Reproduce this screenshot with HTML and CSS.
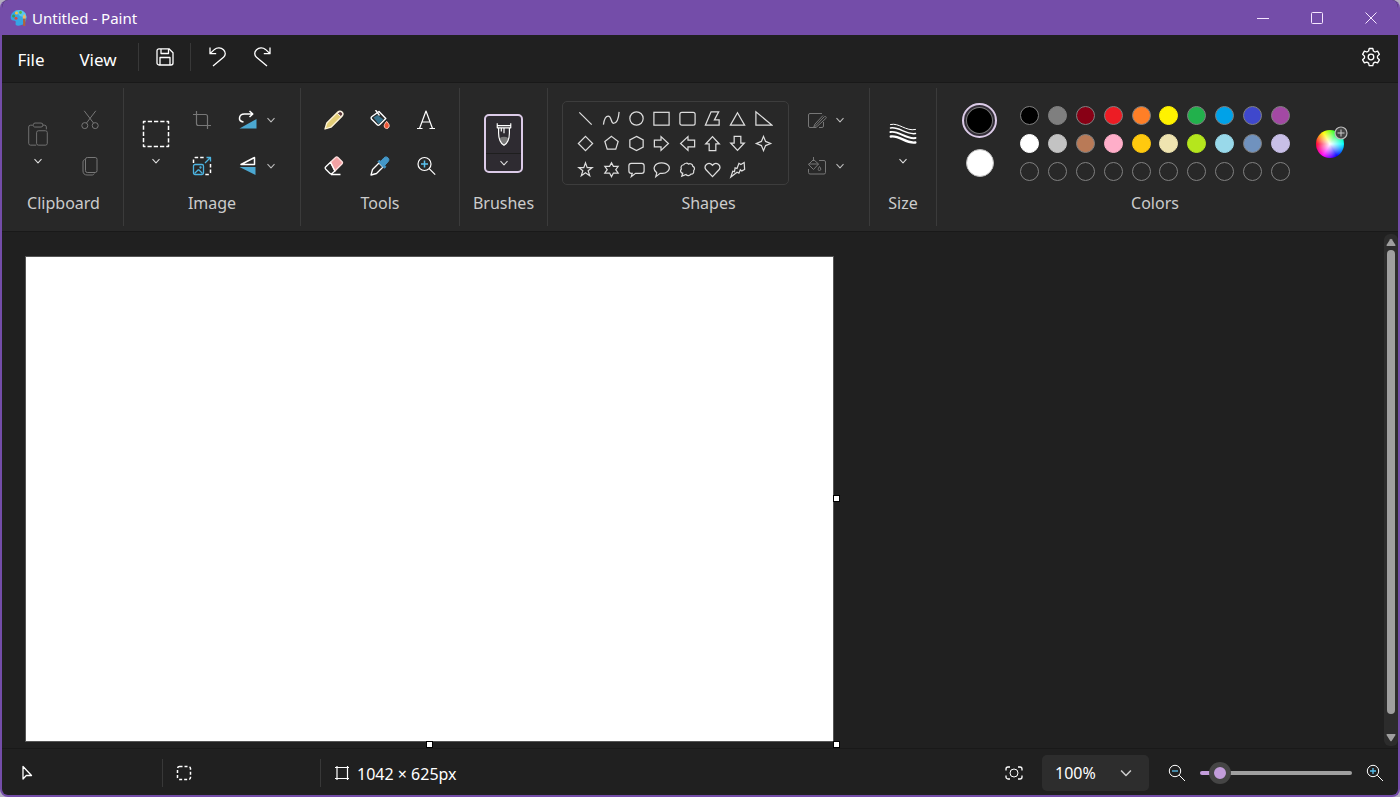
FILE: index.html
```html
<!DOCTYPE html>
<html lang="en">
<head>
<meta charset="utf-8">
<meta name="viewport" content="width=device-width, initial-scale=1">
<title>Untitled - Paint</title>
<link rel="stylesheet" href="styles.css">
</head>
<body>
<svg class="defs" aria-hidden="true">
  <symbol id="chevron" viewBox="0 0 10 10"><path d="M1.500 3.200 5 6.800 8.500 3.200" fill="none" stroke="currentColor" stroke-width="1.100"/></symbol>
</svg>
<div class="window">
  <header class="titlebar">
    <svg class="app-icon" viewBox="0 0 18 18"><path d="M9 1C4 1 .7 4.300.7 8.500c0 2.500 1.500 3 3 2.900 1.800 0 2.400 1 1.900 2.600-.4 1.700.5 2.800 2.500 2.800 5 0 8.400-3.600 8.400-8C16.500 4.200 13.300 1 9 1z" fill="#35a5e5"/><path d="M9 1c4.300 0 7.500 3.200 7.500 7.800L10 7 5 2z" fill="#58c7ee"/><circle cx="3.600" cy="7" r="1.500" fill="#3f9e50"/><circle cx="6.500" cy="4" r="1.600" fill="#f0c34b"/><circle cx="10.500" cy="3.500" r="1.400" fill="#58b947"/><circle cx="6" cy="9.300" r="1.500" fill="#d94a45"/><path d="M13 9.500h2.500l-.3 7.500h-2z" fill="#b0643b"/><path d="M12.600 9.500c0-2 .7-3 1.700-4.500 1 1.500 1.600 2.500 1.600 4.500z" fill="#edb766"/></svg>
    <h1 class="title">Untitled - Paint</h1>
    <div class="window-controls">
      <button class="caption" aria-label="Minimize"><svg viewBox="0 0 14 14"><path d="M1 7.500h12"/></svg></button>
      <button class="caption" aria-label="Maximize"><svg viewBox="0 0 14 14"><rect x="1.500" y="1.500" width="11" height="11" rx="1"/></svg></button>
      <button class="caption" aria-label="Close"><svg viewBox="0 0 14 14"><path d="m1.500 1.500 11 11m0-11-11 11"/></svg></button>
    </div>
  </header>

  <nav class="menubar">
    <button class="menu">File</button>
    <button class="menu">View</button>
    <span class="rule"></span>
    <button class="quick" aria-label="Save"><svg viewBox="0 0 20 20"><path d="M4 1.800h10l4 4V16a2 2 0 0 1-2 2H4a2 2 0 0 1-2-2V3.800a2 2 0 0 1 2-2zM6 2v4.500h7.500V2M5 18v-7.500h10V18"/></svg></button>
    <span class="rule"></span>
    <button class="quick" aria-label="Undo"><svg viewBox="0 0 20 20"><path d="M3 .5v6.200h6.200M3.300 6.400l4.200-4C10 .2 14 .3 16.500 2.700s2.200 5.500 0 7.600L6 19"/></svg></button>
    <button class="quick" aria-label="Redo"><svg viewBox="0 0 20 20"><path d="M17 .5v6.200h-6.200m5.900-.3-4.200-4C10 .2 6 .3 3.500 2.700s-2.200 5.500 0 7.600L14 19"/></svg></button>
    <button class="quick settings" aria-label="Settings"><svg viewBox="0 0 20 20"><circle cx="10" cy="10" r="2.800"/><path d="m8.200 1.500 3.600 0 .6 2.500 1.700 1 2.500-.8 1.800 3.100-1.900 1.800v1.900l1.900 1.800-1.800 3.100-2.500-.8-1.700 1-.6 2.500H8.200l-.6-2.500-1.700-1-2.500.8-1.800-3.100 1.900-1.800V9.100L1.600 7.300l1.800-3.100 2.500.8 1.700-1z"/></svg></button>
  </nav>

  <main class="ribbon">
    <section class="group clipboard" aria-label="Clipboard">
      <div class="body">
        <div class="tall">
          <button class="big dim" aria-label="Paste"><svg viewBox="0 0 28 28"><path d="M8.500 4.500H6a2 2 0 0 0-2 2V24a2 2 0 0 0 2 2h6M19.500 4.500H21a2 2 0 0 1 2 2V9M9 4a1.800 1.800 0 0 1 1.800-1.800h6.400a1.800 1.800 0 0 1 0 4.300h-6.400A1.800 1.800 0 0 1 9 4z"/><rect x="12.500" y="10.500" width="11.500" height="15.500" rx="2"/></svg></button>
          <button class="drop" aria-label="Paste options"><svg><use href="#chevron"/></svg></button>
        </div>
        <div class="cells one">
          <button class="tool dim" aria-label="Cut"><svg viewBox="0 0 20 20"><circle cx="4.800" cy="15.600" r="3"/><circle cx="15.200" cy="15.600" r="3"/><path d="M4.200.8 13.500 13M15.800.8 6.500 13"/></svg></button>
          <button class="tool dim" aria-label="Copy"><svg viewBox="0 0 20 20"><rect x="5.500" y="1.500" width="11.500" height="15" rx="1.800"/><path d="M5.500 3.500C4 3.500 3 4.300 3 6v9c0 2.500 1.500 4 4 4h5c1 0 2-.5 2.300-1.500"/></svg></button>
        </div>
      </div>
      <h2 class="label">Clipboard</h2>
    </section>

    <section class="group image" aria-label="Image">
      <div class="body">
        <div class="tall">
          <button class="big" aria-label="Select"><svg viewBox="0 0 28 28"><rect x="1.500" y="1.500" width="25" height="25" stroke-width="1.500" stroke-dasharray="4.250 2" stroke-dashoffset="2"/></svg></button>
          <button class="drop" aria-label="Select options"><svg><use href="#chevron"/></svg></button>
        </div>
        <div class="cells one">
          <button class="tool dim" aria-label="Crop"><svg viewBox="0 0 20 20"><path d="M1 4.500h12.500a2 2 0 0 1 2 2V19M4.500 1v12.500a2 2 0 0 0 2 2H19" stroke-width="1.200"/></svg></button>
          <button class="tool" aria-label="Resize"><svg viewBox="0 0 20 20"><path d="M1.500 7V3.500a2 2 0 0 1 2-2H13M18.500 8v8.500a2 2 0 0 1-2 2H13" stroke-width="1.500" stroke-dasharray="3.500 2"/><g stroke="#4cb3e0" stroke-width="1.300"><rect x="1.500" y="8.500" width="10" height="10" rx="1.500"/><path d="m2.500 17.500 3.500-3.500h1l3.500 3.500M13 7l5-5m-3.500-.5h4v4"/><circle cx="8.500" cy="11.500" r=".5"/></g></svg></button>
        </div>
        <div class="cells one">
          <div class="split"><button class="tool" aria-label="Rotate"><svg viewBox="0 0 20 20"><path d="M18.500 9v9.500h-17z" fill="#4ba8d2" stroke="none"/><path d="M5.500 12C2.500 11.500 1.300 9.800 1.500 8c.2-2.500 2-4 5-4h8M11.500 1 14.800 4 11.500 7" stroke-width="1.500"/></svg></button><button class="drop" aria-label="Rotate options"><svg><use href="#chevron"/></svg></button></div>
          <div class="split"><button class="tool" aria-label="Flip"><svg viewBox="0 0 20 20"><path d="M16.500 1.500v7H3z" stroke-width="1.500"/><path d="M1.500 11h16v8z" fill="#4ba8d2" stroke="none"/></svg></button><button class="drop" aria-label="Flip options"><svg><use href="#chevron"/></svg></button></div>
        </div>
      </div>
      <h2 class="label">Image</h2>
    </section>

    <section class="group tools" aria-label="Tools">
      <div class="body">
        <div class="cells three">
          <button class="tool" aria-label="Pencil"><svg viewBox="0 0 20 20"><path d="m1 19 1.800-6L13.800 2c1.300-1.300 2.900-1.300 4.200 0s1.300 2.900 0 4.200L7 17.200z" fill="#e3cd77" stroke="#fff4d8" stroke-width="1.300"/><path d="m13.500 3.300 3.300 3.300 1.200-1.300c.8-1 .7-2-.1-2.900s-2-1-3-.3z" fill="#5b3838" stroke="#fff"/></svg></button>
          <button class="tool" aria-label="Fill"><svg viewBox="0 0 20 20"><path d="m2 6.500 7-5 6.800 7-6.300 6.300c-.8.800-1.500.8-2.300 0l-5.500-5.500c-.9-.9-.7-2 .3-2.800z" stroke-width="1.400"/><path d="m3.500 7.500 4-2.500 6 4.500-5 4.500z" fill="#36718b" stroke="none"/><path d="m5.500 0 4 5.500" stroke-width="1.300"/><path d="M16.700 11.300c2.400 3 3 4 2.200 5.800a2.400 2.400 0 0 1-4.400 0c-.8-1.800 0-3 2.200-5.800z" fill="#ed5536" stroke="#ffc8b7"/></svg></button>
          <button class="tool" aria-label="Text"><svg viewBox="0 0 20 20"><path d="M3.500 18.500 10 1l6.500 17.500M6 12h8M1 18.500h5.500M13.500 18.500H19" stroke-width="1.200"/></svg></button>
          <button class="tool" aria-label="Eraser"><svg viewBox="0 0 20 20"><g stroke-width="1.300"><path d="m6.500 6.200 5-4.700c.8-.8 1.600-.8 2.400 0l4 4c.8.800.8 1.700 0 2.500l-7 7z" fill="#f3a2a4" stroke="#ffe0df"/><path d="m6.500 6.200-4.700 4.600c-.8.800-.8 1.700 0 2.500l4 4c.8.800 1.700.8 2.500 0l2.600-2.300zM7 18.500h9.500"/></g></svg></button>
          <button class="tool" aria-label="Color picker"><svg viewBox="0 0 20 20"><path d="m9 7 4 4-6.500 6.500-5.500 1.500 1.500-5.500z" stroke-width="1.300"/><path d="m8 5.500 1.200-1.200 1.600 1L14 1.800c1.200-1.200 2.800-1.200 4 0s1.200 2.800 0 4l-3.200 3.500 1 1.500-1.300 1.500z" fill="#4498c9" stroke="#4498c9"/></svg></button>
          <button class="tool" aria-label="Magnifier"><svg viewBox="0 0 20 20"><circle cx="8.500" cy="8" r="6.500" stroke-width="1.200"/><path d="m13.200 12.700 6 6" stroke-width="1.200"/><path d="M8.500 4.500v7M5 8h7" stroke="#5ac1ee" stroke-width="1.500"/></svg></button>
        </div>
      </div>
      <h2 class="label">Tools</h2>
    </section>

    <section class="group brushes" aria-label="Brushes">
      <div class="body">
        <div class="brush-box">
          <button class="brush" aria-label="Brush"><svg viewBox="0 0 20 28"><path d="M5 17.500c3-2 7-2 10 0-1 3.500-2.500 6.500-5 8-2.500-1.500-4-4.500-5-8z" fill="#777" stroke="none"/><path d="M2.500 1v5h15V1M2.500 3.500h15M4 6v6c0 6 2 11 6 13.500 4-2.500 6-7.500 6-13.500V6M7 6v4M10 6v6" stroke-width="1.300"/></svg></button>
          <button class="drop" aria-label="Brush options"><svg><use href="#chevron"/></svg></button>
        </div>
      </div>
      <h2 class="label">Brushes</h2>
    </section>

    <section class="group shapes" aria-label="Shapes">
      <div class="body">
        <div class="gallery">
          <button aria-label="Line"><svg viewBox="0 0 20 20"><path d="m3.500 3.500 13 13"/></svg></button>
          <button aria-label="Curve"><svg viewBox="0 0 20 20"><path d="M1.500 16.500C2.500 9 4 7.500 6.500 7.500c4 0 2.500 8 6 7.500 3-.5 5-5 5.500-12"/></svg></button>
          <button aria-label="Oval"><svg viewBox="0 0 20 20"><circle cx="10" cy="10" r="7"/></svg></button>
          <button aria-label="Rectangle"><svg viewBox="0 0 20 20"><rect x="2" y="3.500" width="16" height="13.500"/></svg></button>
          <button aria-label="Rounded rectangle"><svg viewBox="0 0 20 20"><rect x="2" y="3.500" width="16" height="13.500" rx="2"/></svg></button>
          <button aria-label="Polygon"><svg viewBox="0 0 20 20"><path d="M8.500 3h8l-4.500 8.500h5V17H2.500z"/></svg></button>
          <button aria-label="Triangle"><svg viewBox="0 0 20 20"><path d="m10 4 7.500 13h-15z"/></svg></button>
          <button aria-label="Right triangle"><svg viewBox="0 0 20 20"><path d="M2 3v14h17z"/></svg></button>
          <button aria-label="Diamond"><svg viewBox="0 0 20 20"><path d="m10 2.500 7.500 7.500-7.500 7.500L2.500 10z"/></svg></button>
          <button aria-label="Pentagon"><svg viewBox="0 0 20 20"><path d="m10 2.500 7 5.300-2.500 8.200h-9L3 7.800z"/></svg></button>
          <button aria-label="Hexagon"><svg viewBox="0 0 20 20"><path d="m10 2.500 7 3.700v7.600l-7 3.700-7-3.700V6.200z"/></svg></button>
          <button aria-label="Right arrow"><svg viewBox="0 0 20 20"><path d="M2.500 6.500h7V2.800L17.300 10l-7.800 7.200v-3.700h-7z"/></svg></button>
          <button aria-label="Left arrow"><svg viewBox="0 0 20 20"><path d="M17.500 6.500h-7V2.800L2.700 10l7.800 7.200v-3.700h7z"/></svg></button>
          <button aria-label="Up arrow"><svg viewBox="0 0 20 20"><path d="M6.500 17.500v-7H2.800L10 2.700l7.200 7.800h-3.700v7z"/></svg></button>
          <button aria-label="Down arrow"><svg viewBox="0 0 20 20"><path d="M6.500 2.500v7H2.800L10 17.300l7.200-7.800h-3.700v-7z"/></svg></button>
          <button aria-label="Four-point star"><svg viewBox="0 0 20 20"><path d="m10 2.500 2.200 5.300 5.300 2.200-5.300 2.200L10 17.500l-2.200-5.300L2.500 10l5.300-2.200z"/></svg></button>
          <button aria-label="Five-point star"><svg viewBox="0 0 20 20"><path d="m10 3 1.800 5h5.200l-4.200 3.300 1.600 5.200-4.400-3-4.400 3 1.600-5.200L3 8h5.200z"/></svg></button>
          <button aria-label="Six-point star"><svg viewBox="0 0 20 20"><path d="m10 3 2 3.700h5l-2.500 3.500L17 13.700h-5l-2 3.800-2-3.800H3l2.500-3.500L3 6.700h5z"/></svg></button>
          <button aria-label="Rounded callout"><svg viewBox="0 0 20 20"><path d="M4.500 3.500h11A2.500 2.500 0 0 1 18 6v5.500a2.500 2.500 0 0 1-2.500 2.500H9l-4.500 3.500L5.500 14h-1A2.500 2.500 0 0 1 2 11.500V6a2.500 2.500 0 0 1 2.500-2.500z"/></svg></button>
          <button aria-label="Oval callout"><svg viewBox="0 0 20 20"><path d="M5 13.500C-.5 9 3 3 10 3s10.500 5 6.500 9c-2 2-5 2.500-8 2L4 17.500z"/></svg></button>
          <button aria-label="Cloud callout"><svg viewBox="0 0 20 20"><path d="M5 14C2.500 13.500 2 11 3.500 9.500 2.500 7 4 5 6 5c1-2 4-2 5-.7 2-1 4.500.2 4.500 2.200 2 1 2.500 3 1 4.700.5 2.500-1 3.800-2.800 3.600-1 2-4 2-5.200.5L4 17z"/></svg></button>
          <button aria-label="Heart"><svg viewBox="0 0 20 20"><path d="M10 17.500 3.200 10.300C0 6 6 .8 10 5.500c4-4.700 10 .5 6.800 4.800z"/></svg></button>
          <button aria-label="Lightning"><svg viewBox="0 0 20 20"><path d="m11.500 3.500 2 1.200 3.500-2 .5 7.300-3 1.500-1.500-1.200-1.500 3.500-2-1-6.500 5 2-6 1.800.5.700-4 2 .7z"/></svg></button>
        </div>
        <div class="cells one">
          <div class="split"><button class="tool dim" aria-label="Shape outline"><svg viewBox="0 0 20 20"><path d="M15 3.500H3a1.500 1.500 0 0 0-1.500 1.500v11A1.500 1.500 0 0 0 3 17.500h4L17 7c1.500-1.500 3 .3 1.800 1.500L9 17.500H6.500L8 14l8-8.500M16.500 12v4a1.500 1.500 0 0 1-1.500 1.500h-3"/></svg></button><button class="drop" aria-label="Outline options"><svg><use href="#chevron"/></svg></button></div>
          <div class="split"><button class="tool dim" aria-label="Shape fill"><svg viewBox="0 0 20 20"><path d="m6.500 3.500 5 4.500-5 5.500-5-5zM1.500 8h10M6.500 1v4M12 4.500h5A1.500 1.500 0 0 1 18.500 6v10.500A1.500 1.500 0 0 1 17 18H3a1.500 1.500 0 0 1-1.500-1.500V13M12.500 10.500c1.500 2 2 3.800 0 4s-1.500-2 0-4z"/></svg></button><button class="drop" aria-label="Fill options"><svg><use href="#chevron"/></svg></button></div>
        </div>
      </div>
      <h2 class="label">Shapes</h2>
    </section>

    <section class="group size" aria-label="Size">
      <div class="body">
        <div class="tall">
          <button class="big" aria-label="Size"><svg viewBox="0 0 28 28"><g stroke-linecap="round"><path d="M1.500 4.500c9-2 15 7 25 5" stroke-width="1"/><path d="M1.500 8c9-1.500 15 7 25 5.500" stroke-width="1.500"/><path d="M1.500 12c9-1.500 15 7.500 25 6" stroke-width="2"/><path d="M1.800 16.500c9-1.500 15 7.500 24.500 6" stroke-width="2.500"/></g></svg></button>
          <button class="drop" aria-label="Size options"><svg><use href="#chevron"/></svg></button>
        </div>
      </div>
      <h2 class="label">Size</h2>
    </section>

    <section class="group colors" aria-label="Colors">
      <div class="body">
        <div class="current">
          <button class="primary" aria-label="Color 1, black"></button>
          <button class="secondary" aria-label="Color 2, white"></button>
        </div>
        <div class="palette">
          <button class="swatch black" aria-label="Black"></button>
          <button class="swatch gray" aria-label="Gray"></button>
          <button class="swatch dark-red" aria-label="Dark red"></button>
          <button class="swatch red" aria-label="Red"></button>
          <button class="swatch orange" aria-label="Orange"></button>
          <button class="swatch yellow" aria-label="Yellow"></button>
          <button class="swatch green" aria-label="Green"></button>
          <button class="swatch turquoise" aria-label="Turquoise"></button>
          <button class="swatch indigo" aria-label="Indigo"></button>
          <button class="swatch purple" aria-label="Purple"></button>
          <button class="swatch white" aria-label="White"></button>
          <button class="swatch light-gray" aria-label="Light gray"></button>
          <button class="swatch brown" aria-label="Brown"></button>
          <button class="swatch rose" aria-label="Rose"></button>
          <button class="swatch gold" aria-label="Gold"></button>
          <button class="swatch light-yellow" aria-label="Light yellow"></button>
          <button class="swatch lime" aria-label="Lime"></button>
          <button class="swatch light-turquoise" aria-label="Light turquoise"></button>
          <button class="swatch blue-gray" aria-label="Blue gray"></button>
          <button class="swatch lavender" aria-label="Lavender"></button>
          <button class="swatch" aria-label="Custom color 1"></button>
          <button class="swatch" aria-label="Custom color 2"></button>
          <button class="swatch" aria-label="Custom color 3"></button>
          <button class="swatch" aria-label="Custom color 4"></button>
          <button class="swatch" aria-label="Custom color 5"></button>
          <button class="swatch" aria-label="Custom color 6"></button>
          <button class="swatch" aria-label="Custom color 7"></button>
          <button class="swatch" aria-label="Custom color 8"></button>
          <button class="swatch" aria-label="Custom color 9"></button>
          <button class="swatch" aria-label="Custom color 10"></button>
        </div>
        <button class="wheel" aria-label="Edit colors"><svg class="wheel-badge" viewBox="0 0 14 14"><circle cx="7" cy="7" r="6" fill="#444" stroke="#bbb" stroke-width="1.200"/><path d="M7 3.500v7M3.500 7h7" stroke="#ccc"/></svg></button>
      </div>
      <h2 class="label">Colors</h2>
    </section>
  </main>

  <div class="workspace">
    <div class="viewport">
      <div class="canvas">
        <span class="handle east"></span>
        <span class="handle south"></span>
        <span class="handle corner"></span>
      </div>
    </div>
    <div class="scrollbar">
      <button aria-label="Scroll up"><svg viewBox="0 0 10 8"><path d="M4.200 1.200a1 1 0 0 1 1.600 0L9.500 7q.2 1-.7 1H1.200Q.3 8 .5 7z"/></svg></button>
      <span class="thumb"></span>
      <button aria-label="Scroll down"><svg viewBox="0 0 10 8"><path d="M4.200 6.800a1 1 0 0 0 1.600 0L9.500 1q.2-1-.7-1H1.200Q.3 0 .5 1z"/></svg></button>
    </div>
  </div>

  <footer class="statusbar">
    <div class="cell"><svg viewBox="0 0 18 18"><path d="M5 2.500v12.500l3.300-3.500h5.200z" stroke-width="1.300"/></svg></div>
    <div class="cell"><svg viewBox="0 0 18 18"><rect x="2.500" y="2.500" width="13" height="13" rx="2" stroke-width="1.500" stroke-dasharray="3 2"/></svg></div>
    <div class="cell"><svg viewBox="0 0 18 18"><path d="M2 3.500h14M2 14.500h14M4 2v14M14.500 2v14" stroke-width="1.200"/></svg><span>1042 × 625px</span></div>
    <div class="zoom">
      <button class="fit" aria-label="Fit to window"><svg viewBox="0 0 18 18"><circle cx="9" cy="9" r="4"/><path d="M1 6.500V5a2 2 0 0 1 2-2h2M13 3h2a2 2 0 0 1 2 2v1.500M17 11.500V13a2 2 0 0 1-2 2h-2M5 15H3a2 2 0 0 1-2-2v-1.500" stroke-width="1.300"/></svg></button>
      <div class="picker">
        <select aria-label="Zoom level"><option>100%</option><option>200%</option></select>
        <svg><use href="#chevron"/></svg>
      </div>
      <button class="step" aria-label="Zoom out"><svg viewBox="0 0 18 18"><circle cx="7" cy="7" r="5.700"/><path d="m11.200 11.200 5.800 5.800"/><path d="M4 7h6" stroke="#5ac1ee" stroke-width="1.300"/></svg></button>
      <input class="slider" type="range" min="0" max="100" value="7" aria-label="Zoom">
      <button class="step" aria-label="Zoom in"><svg viewBox="0 0 18 18"><circle cx="7" cy="7" r="5.700"/><path d="m11.200 11.200 5.800 5.800"/><path d="M4 7h6M7 4v6" stroke="#5ac1ee" stroke-width="1.300"/></svg></button>
    </div>
  </footer>
</div>
</body>
</html>
```
FILE: styles.css
```css
* { box-sizing: border-box; }

body {
  margin: 0;
  background: #b3adc0;
  color: #fff;
  font: 16px/24px "Noto Sans", "Open Sans", sans-serif;
}

button, select {
  margin: 0;
  padding: 0;
  border: 0;
  background: none;
  color: inherit;
  font: inherit;
}

h1, h2 { margin: 0; font-weight: 400; }

svg {
  display: block;
  fill: none;
  stroke: currentColor;
  stroke-linejoin: round;
}

.defs { display: none; }

.window {
  display: flex;
  flex-direction: column;
  min-height: 100vh;
  border: solid #744da9;
  border-width: 0 2px 2px;
  border-radius: 8px;
  background: #202020;
  overflow: hidden;
}

/* Title bar */
.titlebar {
  display: flex;
  align-items: center;
  height: 35px;
  padding-left: 8px;
  background: #744da9;
}
.app-icon { width: 18px; height: 18px; margin-right: 4px; stroke: none; }
.title { font-size: 15px; line-height: 24px; }
.window-controls { display: flex; margin-left: auto; }
.caption { display: grid; place-items: center; width: 54px; height: 35px; color: #f5e6ff; }
.caption svg { width: 14px; height: 14px; }

/* Menu bar */
.menubar {
  display: flex;
  align-items: center;
  height: 47px;
  padding: 0 4px 3px 0;
}
.menu { width: 58px; height: 32px; padding-top: 5px; font-size: 17px; margin-right: 9px; }
.menubar .rule { width: 1px; height: 28px; margin-left: 2px; background: #383838; }
.rule + .quick { margin-left: 3px; }
.quick { display: grid; place-items: center; width: 46px; height: 40px; }
.quick svg { width: 20px; height: 20px; stroke-width: 1.3; }
.menubar .settings { margin-left: auto; }

/* Ribbon */
.ribbon {
  display: flex;
  padding: 5px 0;
  border: solid #191919;
  border-width: 1px 0;
  background: #282828;
}
.group {
  display: flex;
  flex-direction: column;
  align-items: center;
  height: 138px;
  padding-top: 9px;
  border-right: 1px solid #3b3b3b;
}
.clipboard { width: 122px; padding-left: 2px; }
.image { width: 177px; }
.tools { width: 159px; }
.brushes { width: 88px; }
.shapes { width: 322px; }
.size { width: 67px; }
.colors { width: 436px; border: 0; }
.body { display: flex; height: 94px; }
.label { color: #ccc; font-size: 16px; line-height: 24px; }

.cells { display: grid; grid-auto-rows: 46px; }
.one { grid-template-columns: auto; }
.three { grid-template-columns: repeat(3, 46px); }
.tool { display: grid; place-items: center; width: 46px; height: 46px; }
.tool svg { width: 20px; height: 20px; }
.dim { color: #777; }
.drop { display: grid; place-items: center; width: 20px; height: 20px; color: #ddd; }
.drop svg, .picker svg { width: 10px; height: 10px; }
.split { display: flex; align-items: center; }
.split .tool { width: 34px; }
.split .drop { width: 12px; color: #bbb; }
.image .split { padding: 0 14px 0 6px; }
.tall {
  display: flex;
  flex-direction: column;
  align-items: center;
  width: 46px;
  padding-top: 20px;
}
.clipboard .tall, .clipboard .tool { width: 52px; }
.big { display: grid; place-items: center; width: 34px; height: 34px; }
.big svg { width: 28px; height: 28px; }
.clipboard .big svg { width: 26px; height: 26px; }

.brush-box {
  display: flex;
  flex-direction: column;
  width: 39px;
  height: 59px;
  margin-top: 17px;
  border: 2px solid #dccbe8;
  border-radius: 5px;
  background: #2e2b31;
}
.brush { display: grid; flex: 1; place-items: center; border-bottom: 1px solid #1e1e1e; }
.brush svg { width: 18px; height: 26px; }
.brush-box .drop { width: auto; height: 17px; }

.shapes .body { gap: 11px; padding-right: 9px; }
.gallery {
  display: grid;
  grid-template-columns: repeat(8, 1fr);
  grid-template-rows: repeat(3, 1fr);
  width: 227px;
  height: 84px;
  margin-top: 4px;
  padding: 4px 12px 2px 10px;
  border: 1px solid #3d3d3d;
  border-radius: 5px;
}
.gallery button { display: grid; place-items: center; }
.gallery svg { width: 19px; height: 19px; stroke: #ddd; stroke-width: 1.3; stroke-linejoin: miter; }

/* Colors */
.current {
  display: flex;
  flex-direction: column;
  align-items: center;
  gap: 11px;
  width: 35px;
  padding-top: 6px;
}
.primary {
  width: 35px;
  height: 35px;
  border: 2px solid #dccbe8;
  border-radius: 50%;
  background: #000;
  box-shadow: inset 0 0 0 2px #332d38, inset 0 0 0 3px #777;
}
.secondary { width: 28px; height: 28px; border: 1px solid #bbb; border-radius: 50%; background: #fff; }
.palette {
  display: grid;
  grid-template-columns: repeat(10, 1fr);
  grid-auto-rows: 28px;
  place-items: center;
  width: 278px;
  margin: 4px 22px 0 19px;
}
.swatch { width: 19px; height: 19px; border: 1px solid #808080; border-radius: 50%; }
.black { background: #000; }
.gray { background: #7f7f7f; }
.dark-red { background: #880015; }
.red { background: #ed1c24; }
.orange { background: #ff7f27; }
.yellow { background: #fff200; border-color: #fff200; }
.green { background: #22b14c; }
.turquoise { background: #00a2e8; }
.indigo { background: #3f48cc; }
.purple { background: #a349a4; }
.white { background: #fff; border-color: #fff; }
.light-gray { background: #c3c3c3; border-color: #c3c3c3; }
.brown { background: #b97a57; }
.rose { background: #ffaec9; border-color: #ffaec9; }
.gold { background: #ffc90e; border-color: #ffc90e; }
.light-yellow { background: #efe4b0; border-color: #efe4b0; }
.lime { background: #b5e61d; border-color: #b5e61d; }
.light-turquoise { background: #99d9ea; border-color: #99d9ea; }
.blue-gray { background: #7092be; }
.lavender { background: #c8bfe7; border-color: #c8bfe7; }
.wheel {
  position: relative;
  width: 28px;
  height: 28px;
  margin: 33px 4px 0 0;
  border-radius: 50%;
  background:
    radial-gradient(circle, #fff, transparent 70%),
    conic-gradient(from 270deg, #f03, #ff0, #0f3, #0ff, #00f, #f0f, #f03);
}
.wheel-badge { position: absolute; top: -4px; right: -4px; width: 14px; height: 14px; }

/* Drawing area */
.workspace { display: flex; flex: 1; }
.viewport { flex: 1; padding: 25px 0 7px 24px; }
.canvas {
  position: relative;
  width: 807px;
  max-width: 100%;
  aspect-ratio: 1042 / 625;
  background: #fff;
  box-shadow: 0 0 0 1px #555;
}
.handle { position: absolute; width: 7px; height: 7px; border: 1px solid #000; background: #fff; }
.east { left: 100%; top: calc(50% - 4px); }
.south { top: 100%; left: calc(50% - 4px); }
.corner { top: 100%; left: 100%; }

.scrollbar {
  display: flex;
  flex-direction: column;
  align-items: center;
  gap: 4px;
  width: 14px;
  margin: 2px 0;
  padding: 4px 0;
  border-radius: 6px;
  background: #2c2c2c;
}
.scrollbar svg { width: 10px; height: 8px; fill: #9f9f9f; stroke: none; }
.thumb { flex: 1; width: 8px; margin-bottom: 16px; border-radius: 4px; background: #9f9f9f; }

/* Status bar */
.statusbar {
  display: flex;
  align-items: center;
  height: 47px;
  padding-top: 1px;
  border-top: 1px solid #191919;
}
.cell {
  display: flex;
  align-items: center;
  gap: 6px;
  width: 158px;
  height: 28px;
  padding-left: 12px;
  border-left: 1px solid #383838;
}
.cell:first-child { width: 160px; padding-left: 16px; border: 0; }
.statusbar svg { flex: none; width: 18px; height: 18px; }
.cell span { padding-top: 2px; white-space: nowrap; }
.zoom { display: flex; align-items: center; margin-left: auto; padding-right: 9px; }
.fit { display: grid; place-items: center; width: 34px; height: 34px; margin-right: 11px; }
.picker {
  position: relative;
  width: 107px;
  height: 36px;
  margin-right: 14px;
  border-radius: 5px;
  background: #2d2d2d;
}
.picker select { width: 100%; height: 36px; padding: 1px 0 0 13px; appearance: none; }
.picker svg { position: absolute; top: 11px; right: 16px; width: 14px; height: 14px; color: #ccc; pointer-events: none; }
.step { display: grid; place-items: center; width: 28px; height: 28px; }

.slider {
  width: 152px;
  height: 24px;
  margin: 0 9px;
  appearance: none;
  background: none;
}
.slider::-webkit-slider-runnable-track {
  height: 4px;
  border-radius: 2px;
  background: linear-gradient(90deg, #c39ddb 20px, #9f9f9f 20px);
}
.slider::-webkit-slider-thumb {
  width: 22px;
  height: 22px;
  margin-top: -9px;
  border: 5px solid #454545;
  border-radius: 50%;
  background: #c39ddb;
  appearance: none;
}
```
